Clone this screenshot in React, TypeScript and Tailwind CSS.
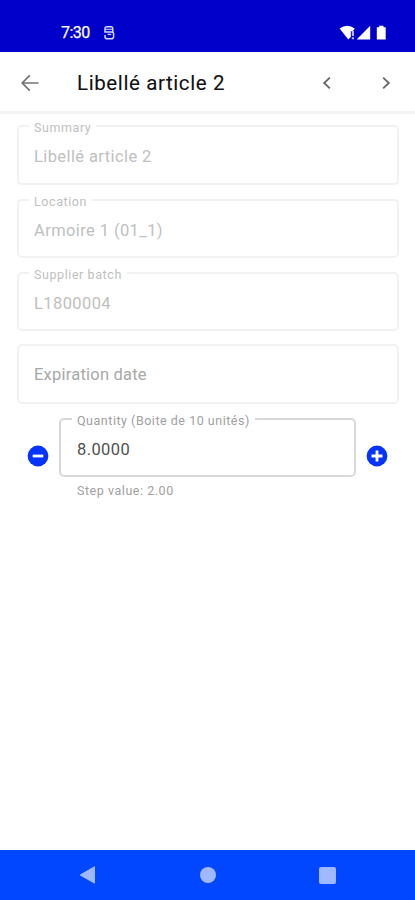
import type { ReactNode } from 'react';

// ── Outlined text field ───────────────────────────────────────────────────────
interface FieldProps {
  label?: string;
  value?: string;
  active?: boolean;
  className?: string;
}

function OutlinedField({ label, value, active = false, className = '' }: FieldProps) {
  return (
    <fieldset
      className={`min-w-0 rounded-[5px] border-2 ${active ? 'border-[#d9d9d9] pl-[16px]' : 'border-[#f1f1f1] pl-[15px]'} ${className}`}
    >
      {label && (
        <legend
          className={`-ml-[5px] h-[14px] pl-[5px] pr-[5px] text-[12.5px] leading-[14px] ${active ? 'tracking-[0.52px] text-[#a0a0a0]' : 'tracking-[0.58px] text-[#c0c0c0]'}`}
        >
          <span className="relative top-[2px] block">{label}</span>
        </legend>
      )}
      <p
        className={`text-[16.5px] leading-[20px] ${active ? 'pt-[14px] tracking-[0.4px] text-[#505050]' : label ? 'pt-[14px] tracking-[0.4px] text-[#c0c0c0]' : 'pt-[19px] tracking-[0.22px] text-[#a8a8a8]'}`}
      >
        {value}
      </p>
    </fieldset>
  );
}

// ── Round step button ─────────────────────────────────────────────────────────
function StepButton({ label, children }: { label: string; children: ReactNode }) {
  return (
    <button type="button" aria-label={label} className="mt-[33px] h-[22px] w-[22px] shrink-0">
      <svg viewBox="0 0 22 22" className="h-[22px] w-[22px]">
        <circle cx="11" cy="11" r="10.4" fill="#0433fa" />
        <g stroke="#fff" strokeWidth="2.8">{children}</g>
      </svg>
    </button>
  );
}

function StatusBar() {
  return (
    <div className="flex h-[52px] items-start bg-[#0000cb] pl-[61px] pr-[28px] pt-[24px] text-white">
      <span className="w-[30px] text-[16px] leading-[18px] tracking-[-0.5px] [-webkit-text-stroke:0.25px_#fff]">7:30</span>
      <svg viewBox="0 0 12 16" className="ml-[12px] mt-px h-[16px] w-[12px]" fill="none" stroke="#d8d8ff" strokeWidth="1.5">
        <path d="M9.8 6.9V3.6Q9.8 1.8 8 1.8H4Q2 1.8 2 3.8V6.9H8.5Q10.6 6.9 10.6 8.8V11.4Q10.6 13.8 8.2 13.8H4.4Q2 13.8 2 11.4V10" />
        <path d="M2 4.3H9.8M4.6 9.4H8.2" strokeWidth="1.1" />
      </svg>
      <svg viewBox="0 0 48 16" className="ml-auto mt-px h-[16px] w-[48px]" fill="#fff">
        <path d="M0.6 3.6Q8.2-2.1 15.8 3.6L13.7 6.2H11.8V12.1L9.3 14.5Z" />
        <path d="M12.8 5.8h2.2v5.3h-2.2zM12.8 12.2h2.2v2.1h-2.2z" fill="#b8b8ff" />
        <path d="M17.7 14.4L31.2.8V14.4Z" />
        <path d="M37.8 2.2h2.4V.8h4.3v1.4h2.2v12.2h-8.9z" />
      </svg>
    </div>
  );
}

function AppBar() {
  return (
    <header className="flex h-[62px] items-center border-b-[3px] border-[#f3f3f3] bg-white pl-[20px] pr-[19px]">
      <svg viewBox="0 0 20 20" className="mt-[2px] h-[20px] w-[20px]" fill="none" stroke="#747474" strokeWidth="1.7">
        <path d="M18.5 10H2.4M9.8 2.4L2.2 10l7.6 7.6" />
      </svg>
      <h1 className="ml-[37px] mt-[3px] whitespace-nowrap text-[20.5px] font-normal leading-[24px] tracking-[0.6px] text-[#111] [-webkit-text-stroke:0.1px_#111]">
        Libellé article 2
      </h1>
      <div className="ml-auto mt-[2px] flex gap-[39px]">
        <svg viewBox="0 0 20 20" className="h-[20px] w-[20px]" fill="none" stroke="#666" strokeWidth="1.8">
          <path d="M12.8 4.6L7.2 10l5.6 5.4" />
        </svg>
        <svg viewBox="0 0 20 20" className="h-[20px] w-[20px]" fill="none" stroke="#666" strokeWidth="1.8">
          <path d="M7.2 4.6L12.8 10l-5.6 5.4" />
        </svg>
      </div>
    </header>
  );
}

// ── Android navigation bar ────────────────────────────────────────────────────
function NavigationBar() {
  return (
    <nav className="flex h-[50px] items-center justify-between bg-[#0047ff] pl-[79px] pr-[79px]">
      <svg viewBox="0 0 18 18" className="h-[18px] w-[18px]">
        <path d="M1.2 9L15.5.8V17.2Z" fill="#9fb8ff" stroke="#9fb8ff" strokeLinejoin="round" />
      </svg>
      <span className="h-[16px] w-[16px] rounded-full bg-[#9fb8ff]" />
      <span className="h-[17px] w-[17px] rounded-[2px] bg-[#9fb8ff]" />
    </nav>
  );
}

export default function App() {
  return (
    <div className="flex h-[900px] w-[415px] flex-col overflow-hidden bg-white font-['Roboto','Liberation_Sans',sans-serif]">
      <StatusBar />
      <AppBar />
      <main className="flex-1 pl-[17px] pr-[16px] pt-[5px]">
        <div className="flex flex-col gap-[8px]">
          <OutlinedField label="Summary" value="Libellé article 2" className="h-[66px]" />
          <OutlinedField label="Location" value="Armoire 1 (01_1)" className="h-[65px]" />
          <OutlinedField label="Supplier batch" value="L1800004" className="h-[65px]" />
          <OutlinedField value="Expiration date" className="mt-[5px] h-[60px]" />
        </div>
        <div className="mt-[8px] flex items-start pl-[10px] pr-[11px]">
          <StepButton label="Decrease">
            <path d="M5.7 11H16.3" />
          </StepButton>
          <div className="mx-[10px] flex-1">
            <OutlinedField active label="Quantity (Boite de 10 unités)" value="8.0000" className="h-[65px]" />
            <p className="ml-[18px] mt-[6px] text-[12.5px] leading-[16px] tracking-[0.54px] text-[#a0a0a0]">
              Step value: 2.00
            </p>
          </div>
          <StepButton label="Increase">
            <path d="M5.5 11H16.5M11 5.5V16.5" />
          </StepButton>
        </div>
      </main>
      <NavigationBar />
    </div>
  );
}
